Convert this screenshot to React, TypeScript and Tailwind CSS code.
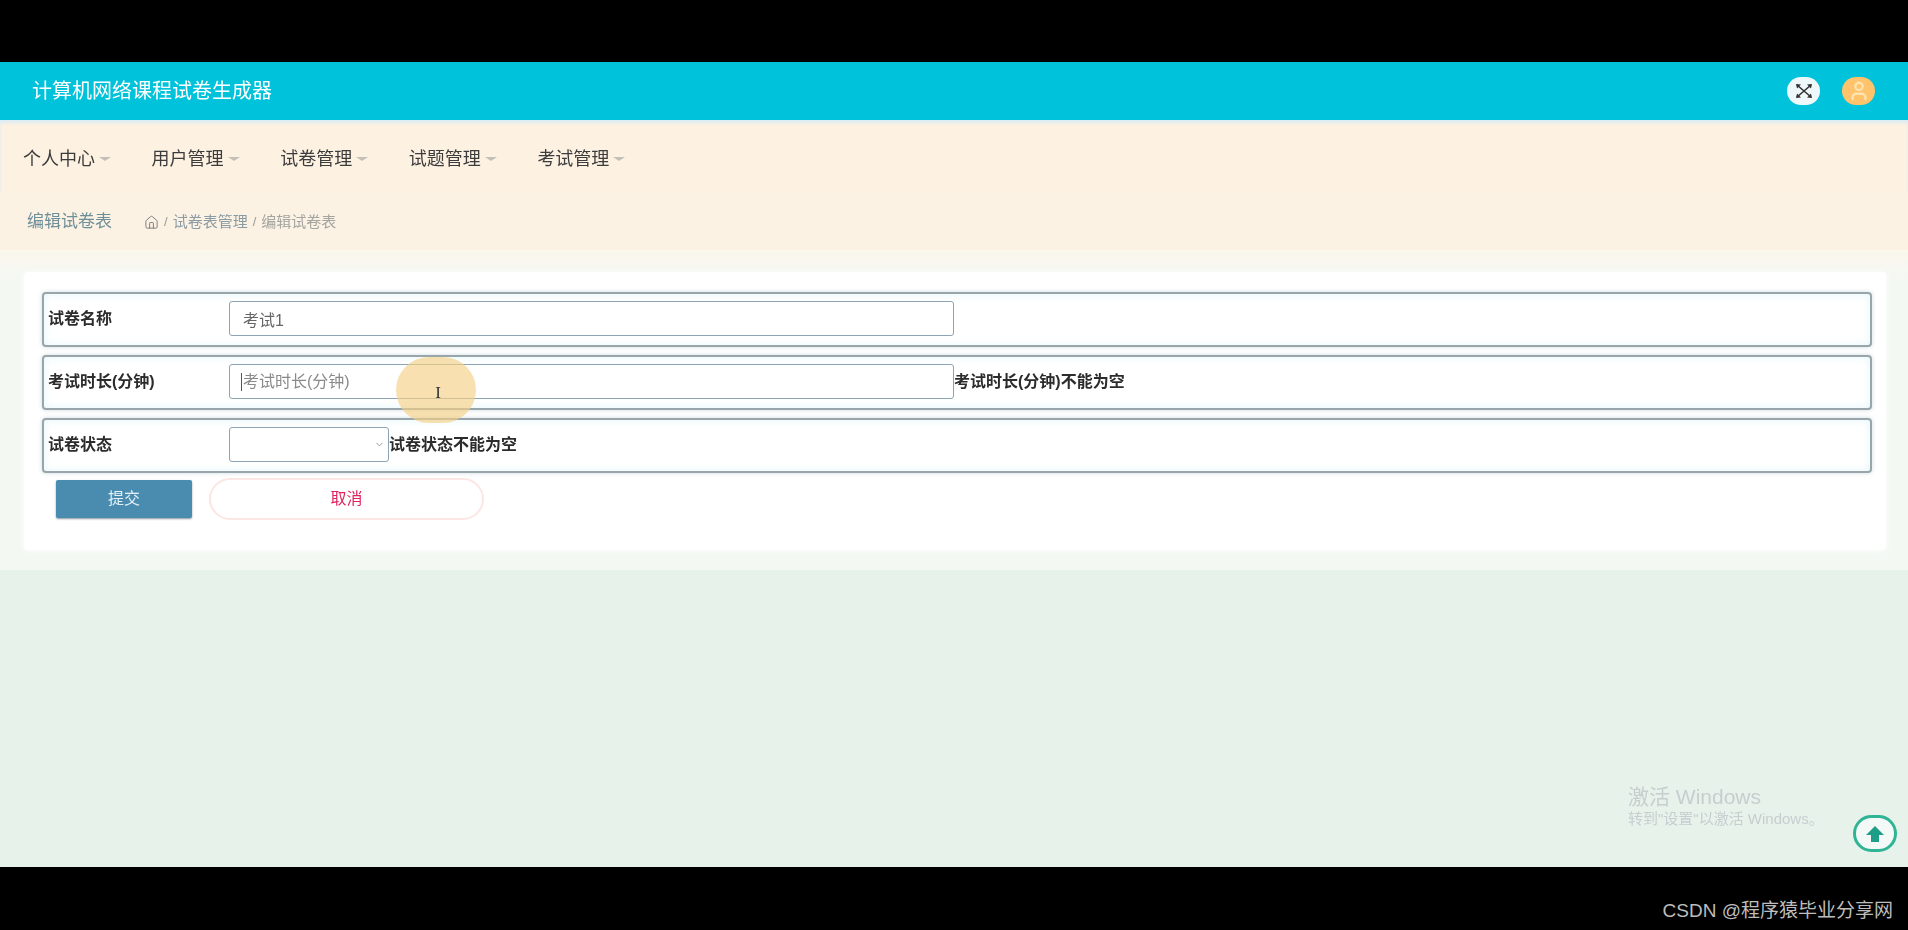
import React from "react";
import { ChevronDown, House, User } from "lucide-react";

const FONT = { fontFamily: '"Liberation Sans", "Noto Sans CJK SC", sans-serif' };

const NAV_ITEMS = ["个人中心", "用户管理", "试卷管理", "试题管理", "考试管理"];

function NavItem({ label }: { label: string }) {
  return (
    <div className="w-[128.6px] flex items-center text-[18px] text-[#3c3c3c] shrink-0">
      <span>{label}</span>
      <span className="ml-1 mt-[-2px] w-0 h-0 border-x-[6px] border-x-transparent border-t-[4px] border-t-[#c4c0b9]" />
    </div>
  );
}

function FormRow({ label, children }: { label: string; children: React.ReactNode }) {
  return (
    <div className="h-[55px] flex items-center rounded-[4px] border-2 border-[#98a6ab] bg-white pl-[4px] shadow-[0_0_4px_rgba(120,150,160,0.35),inset_0_0_8px_rgba(225,245,250,0.9)]">
      <div className="w-[181px] shrink-0 mt-[-2px] text-[16px] font-bold text-[#2c2c2c]">{label}</div>
      {children}
    </div>
  );
}

export default function App() {
  return (
    <div className="w-[1908px] h-[930px] flex flex-col bg-black overflow-hidden" style={FONT}>
      <div className="h-[62px] shrink-0" />

      <div className="relative h-[805px] shrink-0 flex flex-col bg-[#e7f2eb] blur-[0.4px]">
        {/* Header */}
        <div className="h-[58px] shrink-0 bg-[#00c2da] flex items-center justify-between pl-[32px] pr-[33px]">
          <span className="text-[20px] text-white">计算机网络课程试卷生成器</span>
          <div className="flex items-center gap-[22px]">
            <div className="w-[33px] h-[28px] rounded-full bg-[#eef8fb] flex items-center justify-center text-[#333]">
              <svg width="22" height="18" viewBox="0 0 22 18" fill="none" stroke="currentColor" strokeWidth="1.6">
                <path d="M4 3 L18 15 M18 3 L4 15" />
                <path d="M3 2 L8 2.5 L4 6.5 Z M19 2 L14 2.5 L18 6.5 Z M19 16 L14 15.5 L18 11.5 Z M3 16 L8 15.5 L4 11.5 Z" fill="currentColor" stroke="none" />
              </svg>
            </div>
            <div className="w-[33px] h-[28px] rounded-full bg-[#ffc36b] flex items-center justify-center text-[#fde3b0]">
              <User size={22} strokeWidth={2.5} />
            </div>
          </div>
        </div>

        {/* Nav */}
        <div className="h-[72px] shrink-0 bg-[#fdf1e2] flex items-center pl-[23px] pt-[7px] shadow-[inset_0_3px_3px_rgba(215,235,245,0.9)]">
          {NAV_ITEMS.map((item) => (
            <NavItem key={item} label={item} />
          ))}
        </div>

        {/* Breadcrumb */}
        <div className="h-[58px] shrink-0 bg-[#fcf2e4] flex items-center pl-[27px] pt-[2px]">
          <span className="w-[117px] text-[17px] text-[#6f8f98]">编辑试卷表</span>
          <House size={15} strokeWidth={1.5} className="text-[#777]" />
          <span className="ml-[5px] text-[13px] text-[#999]">/</span>
          <span className="ml-[5px] text-[15px] text-[#8b9ba3]">试卷表管理</span>
          <span className="ml-[5px] text-[13px] text-[#999]">/</span>
          <span className="ml-[5px] text-[15px] text-[#a3a3a0]">编辑试卷表</span>
        </div>

        {/* Content */}
        <div className="h-[320px] shrink-0 bg-gradient-to-b from-[#fbf7ec] via-[#f4f8f3] via-[8%] to-[#f4f8f3] pt-[22px] px-[24px]">
          <div className="w-[1862px] h-[278px] bg-white rounded-[4px] pt-[20px] pl-[18px] pr-[14px] flex flex-col gap-2 shadow-[0_0_6px_rgba(255,255,255,0.9)]">
            <FormRow label="试卷名称">
              <input
                defaultValue="考试1"
                className="w-[725px] h-[35px] rounded-[3px] border border-[#8ea4b4] bg-white pl-[13px] mt-[-2px] text-[16px] text-[#666] outline-none"
              />
            </FormRow>
            <FormRow label="考试时长(分钟)">
              <div className="relative flex items-center mt-[-2px]">
                <input
                  placeholder="考试时长(分钟)"
                  className="w-[725px] h-[35px] rounded-[3px] border border-[#8ea4b4] bg-white pl-[13px] text-[16px] text-[#666] placeholder:text-[#8a8a8a] outline-none"
                />
                <span className="absolute left-[12px] top-[9px] w-px h-[18px] bg-[#555]" />
              </div>
              <span className="mt-[-2px] text-[16px] font-semibold text-[#2c2c2c]">考试时长(分钟)不能为空</span>
            </FormRow>
            <FormRow label="试卷状态">
              <div className="relative flex items-center mt-[-2px]">
                <select className="w-[160px] h-[35px] rounded-[3px] border border-[#8ea4b4] bg-white text-[14px] outline-none appearance-none" />
                <ChevronDown size={11} strokeWidth={2} className="absolute right-[4px] top-[12px] text-[#8a9a95]" />
              </div>
              <span className="mt-[-2px] text-[16px] font-semibold text-[#2c2c2c]">试卷状态不能为空</span>
            </FormRow>

            <div className="flex items-center pl-[14px] gap-[17px] mt-[-3px]">
              <button className="w-[136px] h-[38px] bg-[#4a8cb0] rounded-[2px] text-[16px] text-[#e4f1f6] shadow-[0_1px_2px_rgba(60,80,100,0.6)]">
                提交
              </button>
              <button className="w-[275px] h-[42px] bg-white rounded-full border-2 border-[#fbe6e4] text-[16px] text-[#e0245e]">
                取消
              </button>
            </div>
          </div>
        </div>

        {/* Cursor highlight from the screen recording */}
        <div className="absolute left-[396px] top-[295px] w-[80px] h-[66px] rounded-full bg-[#f5cf86]/65 flex items-center justify-center">
          <span className="text-[17px] text-[#333] mt-[6px] ml-[4px]" style={{ fontFamily: '"Liberation Serif", serif' }}>
            I
          </span>
        </div>

        {/* Windows watermark */}
        <div className="absolute left-[1628px] top-[722px] text-[#c6ced0]">
          <div className="text-[21px] leading-[26px]">激活 Windows</div>
          <div className="text-[15px] leading-[18px] whitespace-nowrap">转到"设置"以激活 Windows。</div>
        </div>

        {/* Back to top */}
        <div className="absolute left-[1853px] top-[753px] w-[44px] h-[37px] rounded-full border-[3px] border-[#2fb596] bg-[#f3f9f6] flex items-center justify-center">
          <svg width="22" height="18" viewBox="0 0 22 18" className="text-[#1e9e86]">
            <path d="M11 1 L20 10 H15 V17 H7 V10 H2 Z" fill="currentColor" />
          </svg>
        </div>
      </div>

      {/* Bottom bar */}
      <div className="flex-1 flex items-center justify-end pr-[15px] pt-[25px] text-[19px] text-[#bdbdbd]">
        CSDN @程序猿毕业分享网
      </div>
    </div>
  );
}
